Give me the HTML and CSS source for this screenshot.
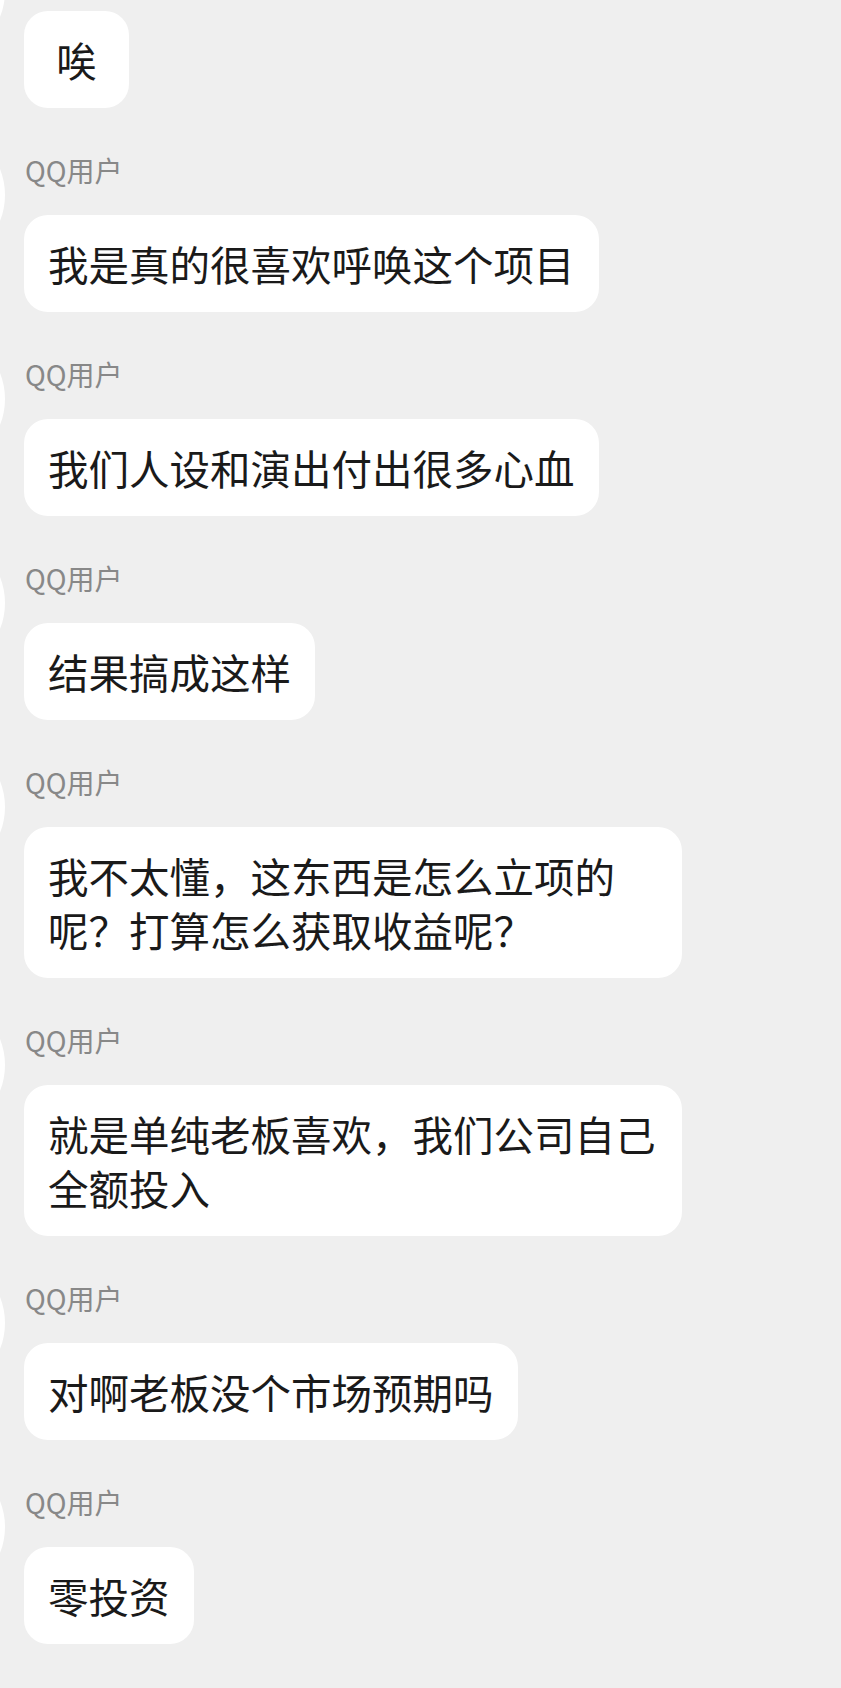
FILE: index.html
```html
<!DOCTYPE html>
<html lang="zh-CN">
<head>
<meta charset="utf-8">
<title>QQ聊天</title>
<link rel="stylesheet" href="styles.css">
</head>
<body>
<div class="chat">
  <div class="msg">
    <div class="avatar"></div>
    <div class="body">
      <div class="name name-offscreen"></div>
      <div class="bubble bubble-short">唉</div>
    </div>
  </div>
  <div class="msg">
    <div class="avatar"></div>
    <div class="body">
      <div class="name">QQ用户</div>
      <div class="bubble">我是真的很喜欢呼唤这个项目</div>
    </div>
  </div>
  <div class="msg">
    <div class="avatar"></div>
    <div class="body">
      <div class="name">QQ用户</div>
      <div class="bubble">我们人设和演出付出很多心血</div>
    </div>
  </div>
  <div class="msg">
    <div class="avatar"></div>
    <div class="body">
      <div class="name">QQ用户</div>
      <div class="bubble">结果搞成这样</div>
    </div>
  </div>
  <div class="msg">
    <div class="avatar"></div>
    <div class="body">
      <div class="name">QQ用户</div>
      <div class="bubble">我不太懂，这东西是怎么立项的呢？打算怎么获取收益呢？</div>
    </div>
  </div>
  <div class="msg">
    <div class="avatar"></div>
    <div class="body">
      <div class="name">QQ用户</div>
      <div class="bubble">就是单纯老板喜欢，我们公司自己全额投入</div>
    </div>
  </div>
  <div class="msg">
    <div class="avatar"></div>
    <div class="body">
      <div class="name">QQ用户</div>
      <div class="bubble">对啊老板没个市场预期吗</div>
    </div>
  </div>
  <div class="msg">
    <div class="avatar"></div>
    <div class="body">
      <div class="name">QQ用户</div>
      <div class="bubble">零投资</div>
    </div>
  </div>
</div>
</body>
</html>
```
FILE: styles.css
```css
html, body {
  margin: 0;
  padding: 0;
  background: #efefef;
}

body {
  font-family: "Noto Sans CJK SC", "Noto Sans", sans-serif;
  overflow: hidden;
}

.chat {
  display: flex;
  flex-direction: column;
  gap: 44px;
  margin-top: -52px;
}

.msg {
  display: flex;
  align-items: flex-start;
}

.avatar {
  flex-shrink: 0;
  width: 140px;
  height: 140px;
  border-radius: 50%;
  background: #ffffff;
  margin-left: -135px;
  margin-top: -27px;
}

.body {
  display: flex;
  flex-direction: column;
  align-items: flex-start;
  margin-left: 19px;
}

.name {
  height: 36px;
  font-size: 28px;
  line-height: 36px;
  color: #888888;
  margin-bottom: 27px;
  margin-left: 1px;
}

.bubble {
  box-sizing: border-box;
  max-width: 658px;
  min-width: 105px;
  padding: 21.5px 24px;
  background: #ffffff;
  border-radius: 24px;
  font-size: 40.5px;
  line-height: 54px;
  color: #1a1a1a;
}

.bubble-short {
  text-align: center;
}
```
